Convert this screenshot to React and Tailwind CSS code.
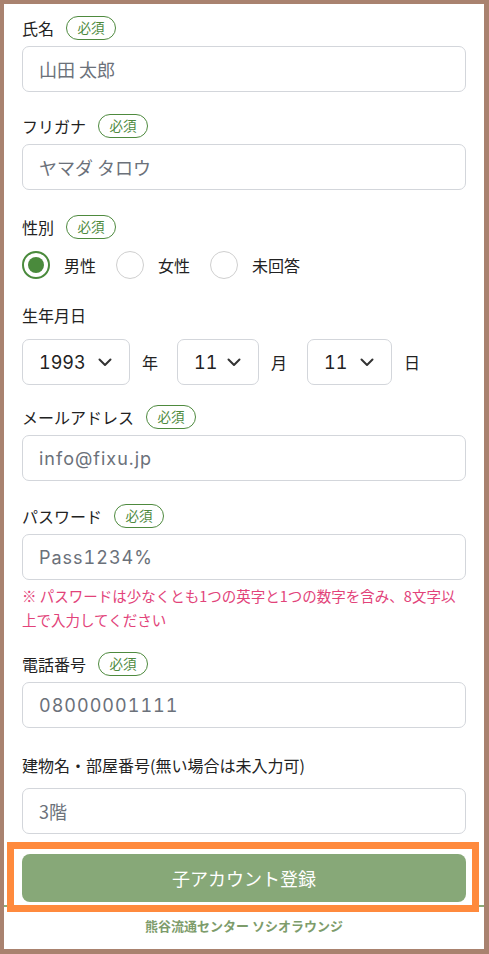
import React from "react";

const font = { fontFamily: '"Noto Sans CJK JP", "Noto Sans", sans-serif' };
const latinFont = { fontFamily: 'Inter, "Noto Sans CJK JP", sans-serif' };

function Badge() {
  return (
    <span className="ml-[12px] inline-flex h-[24px] w-[50px] items-center justify-center rounded-full border-[1.5px] border-[#4e8a3e] text-[13.5px] leading-none text-[#4e8a3e]">
      必須
    </span>
  );
}

function Label({ children, required, className = "" }) {
  return (
    <div className={"flex h-[24px] items-center text-[16px] leading-none text-[#222] " + className}>
      <span>{children}</span>
      {required && <Badge />}
    </div>
  );
}

function Input({ value, latin, className = "" }) {
  return (
    <div
      className={
        "flex h-[46px] w-full items-center rounded-[7px] border border-[#d3d6db] bg-white px-[16px] text-[18px] text-[#6b717a] " +
        (latin ? "tracking-[1px] tabular-nums " : "") +
        className
      }
      style={latin ? latinFont : undefined}
    >
      {value}
    </div>
  );
}

function Chevron() {
  return (
    <svg width="14" height="9" viewBox="0 0 14 9" fill="none">
      <path d="M1.5 1.5 L7 7 L12.5 1.5" stroke="#333" strokeWidth="2" strokeLinecap="round" strokeLinejoin="round" />
    </svg>
  );
}

function Select({ value, w }) {
  return (
    <div
      className={
        "flex h-[46px] items-center justify-between rounded-[7px] border border-[#d3d6db] bg-white pl-[16px] pr-[17px] text-[18px] text-[#222] " +
        w
      }
    >
      <span className="tabular-nums" style={latinFont}>{value}</span>
      <Chevron />
    </div>
  );
}

function Radio({ checked, label, className = "" }) {
  return (
    <div className={"flex items-center " + className}>
      {checked ? (
        <span className="flex h-[28px] w-[28px] items-center justify-center rounded-full border-2 border-[#4a8a3c] bg-white">
          <span className="h-[16px] w-[16px] rounded-full bg-[#4a8a3c]" />
        </span>
      ) : (
        <span className="h-[28px] w-[28px] rounded-full border-[1.5px] border-[#cfcfcf] bg-white" />
      )}
      <span className="ml-[14px] text-[16px] leading-none text-[#222]">{label}</span>
    </div>
  );
}

export default function App() {
  return (
    <div
      className="h-[954px] w-[489px] border-t-[4px] border-l-[4px] border-r-[5px] border-b-[5px] border-[#a9826f] bg-white"
      style={font}
    >
      <div className="flex h-full flex-col">
        <div className="px-[18px] pt-[12px]">
          <Label required>氏名</Label>
          <Input value="山田 太郎" className="mt-[6px]" />

          <Label required className="mt-[22px]">フリガナ</Label>
          <Input value="ヤマダ タロウ" className="mt-[6px]" />

          <Label required className="mt-[25px]">性別</Label>
          <div className="mt-[12px] flex items-center">
            <Radio checked label="男性" />
            <Radio label="女性" className="ml-[20px]" />
            <Radio label="未回答" className="ml-[20px]" />
          </div>

          <Label className="mt-[24px]">生年月日</Label>
          <div className="mt-[12px] flex items-center text-[16px] text-[#222]">
            <Select value="1993" w="w-[108px]" />
            <span className="ml-[12px]">年</span>
            <div className="ml-[19px]">
              <Select value="11" w="w-[82px]" />
            </div>
            <span className="ml-[12px]">月</span>
            <div className="ml-[20px]">
              <Select value="11" w="w-[85px]" />
            </div>
            <span className="ml-[12px]">日</span>
          </div>

          <Label required className="mt-[20px]">メールアドレス</Label>
          <Input value="info@fixu.jp" latin className="mt-[6px]" />

          <Label required className="mt-[23px]">パスワード</Label>
          <Input value="Pass1234%" latin className="mt-[6px]" />
          <p className="mt-[4px] text-[14.5px] leading-[24px] text-[#e2437a]">
            ※ パスワードは少なくとも1つの英字と1つの数字を含み、8文字以上で入力してください
          </p>

          <Label required className="mt-[20px]">電話番号</Label>
          <Input value="08000001111" latin className="mt-[6px]" />

          <Label className="mt-[25px]">建物名・部屋番号(無い場合は未入力可)</Label>
          <Input value="3階" className="mt-[11px]" />

          <div className="relative mt-[20px]">
            <button className="flex h-[48px] w-full items-center justify-center rounded-[8px] bg-[#87a878] text-[18px] text-white">
              子アカウント登録
            </button>
            <div className="pointer-events-none absolute -bottom-[10px] -left-[15px] -right-[13px] -top-[12px] z-10 border-[7px] border-[#ff8a3d]" />
          </div>
        </div>
        <div className="mt-[3px] flex flex-1 justify-center border-t-2 border-[#8aab78] pt-[9px]">
          <span className="text-[13px] font-bold leading-[20px] text-[#7d9c6b]">熊谷流通センター ソシオラウンジ</span>
        </div>
      </div>
    </div>
  );
}
